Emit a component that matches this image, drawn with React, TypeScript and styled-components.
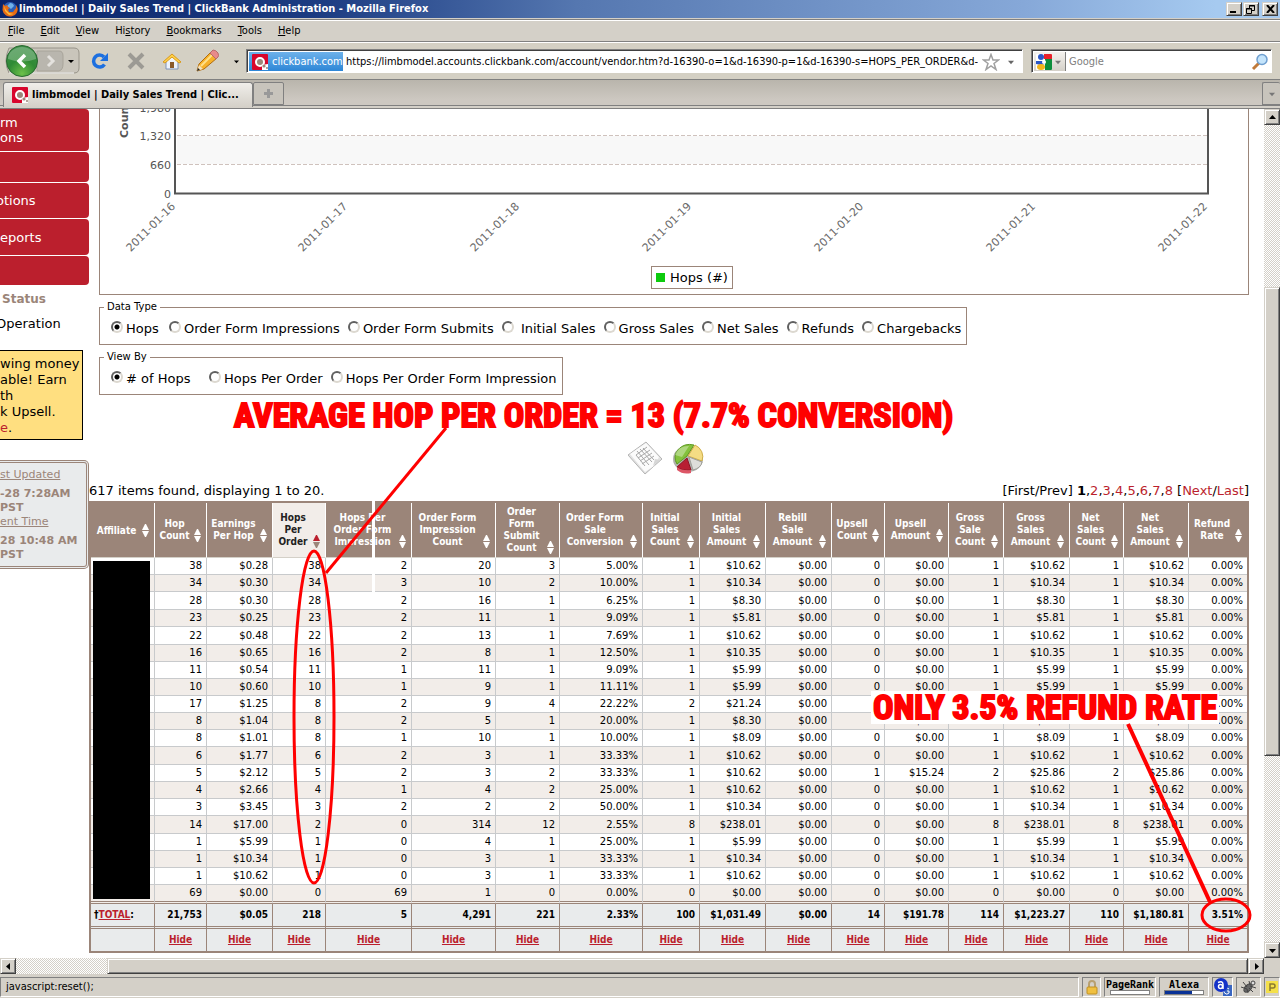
import React from "react";
import styled, { createGlobalStyle, css } from "styled-components";

const ui = '"DejaVu Sans Condensed", "DejaVu Sans", sans-serif';
const page = '"DejaVu Sans", sans-serif';
const face = "#d4d0c8";
const taupe = "#9b8579";
const red = "#bb1f2d";

const Global = createGlobalStyle`
  *, *::before, *::after { box-sizing: border-box; }
  body { margin: 0; background: ${face}; font-family: ${page}; font-size: 13px; color: #000; }
  button { font: inherit; color: inherit; padding: 0; border: 0; background: none; }
  svg { flex: none; }
  a { color: ${red}; }
`;

const raised = css`
  background: ${face};
  border: 1px solid;
  border-color: ${face} #404040 #404040 ${face};
  box-shadow: inset 1px 1px 0 #fff, inset -1px -1px 0 #808080;
`;
const sunken = css`
  border: 1px solid;
  border-color: #808080 #fff #fff #808080;
`;

/* ---------- window ---------- */
const Window = styled.div`
  display: flex;
  flex-direction: column;
  min-height: 100vh;
  overflow: hidden;
`;
const TitleBar = styled.header`
  display: flex;
  align-items: center;
  gap: 1px;
  height: 19px;
  padding: 0 2px;
  border-bottom: 1px solid ${face};
  background: linear-gradient(90deg, #0a246a 0%, #1c3c82 25%, #5577b0 45%, #86a8d8 80%, #a6caf0 95%);
  color: #fff;
  font: bold 11px/18px ${ui};
`;
const TitleText = styled.h1`
  flex: 1;
  margin: 0;
  font: inherit;
  white-space: nowrap;
`;
const WinButton = styled.button<{ $gap?: boolean }>`
  ${raised}
  display: grid;
  place-items: center;
  width: 16px;
  height: 14px;
  margin-left: ${(p) => (p.$gap ? 2 : 0)}px;
`;
const MenuBar = styled.nav`
  display: flex;
  align-items: center;
  gap: 16px;
  height: 23px;
  padding: 1px 8px 0;
  border-top: 1px solid #808080;
  border-bottom: 1px solid #808080;
  box-shadow: inset 0 1px 0 #fff;
  background: ${face};
  font: 11px/14px ${ui};
`;
const ToolBar = styled.div`
  display: flex;
  align-items: center;
  height: 37px;
  padding: 0 8px 0 3px;
  border-top: 1px solid #fff;
  background: #d4d0c4;
`;
const NavGroup = styled.div`
  display: flex;
  align-items: center;
  width: 79px;
`;
const ToolButton = styled.button`
  display: grid;
  place-items: center;
  width: 36px;
  height: 32px;
`;
const SmallArrow = styled.button`
  display: grid;
  place-items: center;
  width: 20px;
  height: 20px;
`;
const Field = styled.div<{ $fixed?: boolean }>`
  display: flex;
  align-items: stretch;
  height: 24px;
  margin-left: ${(p) => (p.$fixed ? 8 : 0)}px;
  border: 1px solid;
  border-color: #808080 #fff #fff #808080;
  box-shadow: inset 1px 1px 0 #404040;
  background: #fff;
  padding: 2px 1px 1px 2px;
  min-width: 0;
  ${(p) => (p.$fixed ? "width: 241px; flex: none;" : "flex: 1;")}
`;
const SiteButton = styled.button`
  display: flex;
  align-items: center;
  gap: 4px;
  flex: none;
  width: 94px;
  padding-left: 3px;
  background: linear-gradient(#6db1ea, #2d86d6);
  color: #fff;
  font: 11px/16px ${ui};
  white-space: nowrap;
`;
const TextInput = styled.input`
  flex: 1;
  min-width: 0;
  border: 0;
  padding: 0 3px;
  background: none;
  font: 11px/16px ${ui};
  color: #000;
  &::placeholder { color: #808080; opacity: 1; }
`;
const EngineButton = styled.button`
  display: flex;
  align-items: center;
  gap: 3px;
  flex: none;
  width: 32px;
  padding-left: 2px;
  border-right: 1px solid #808080;
  background: linear-gradient(#f4f2ee, #d4d0c8);
`;
const IconButton = styled.button`
  display: grid;
  place-items: center;
  flex: none;
  width: 20px;
`;
const TabBar = styled.div`
  display: flex;
  align-items: flex-end;
  height: 30px;
  padding-left: 3px;
  border-top: 1px solid #808080;
  border-bottom: 1px solid #808080;
  background: linear-gradient(#b9b5ac, #cdc8c1 20px, #cdc8c1 25px, #808080 25px, #808080 26px, ${face} 26px);
`;
const Tab = styled.button`
  display: flex;
  align-items: center;
  gap: 4px;
  width: 250px;
  height: 25px;
  margin-bottom: 1px;
  padding: 0 9px 0 8px;
  border: 1px solid #808080;
  border-bottom: 0;
  border-radius: 3px 3px 0 0;
  background: linear-gradient(#f0eeea, ${face});
  font: bold 11px/16px ${ui};
  white-space: nowrap;
`;
const NewTab = styled.button`
  display: grid;
  place-items: center;
  width: 31px;
  height: 23px;
  margin-bottom: 3px;
  border: 1px solid #808080;
  border-radius: 2px 2px 0 0;
  background: #c8c4bc;
`;
const TabList = styled(NewTab)`
  width: 18px;
  margin-left: auto;
  border-right: 0;
`;

/* ---------- scroll bars ---------- */
const Viewport = styled.div`
  display: grid;
  grid-template-columns: minmax(0, 1fr) 16px;
  grid-template-rows: 1fr 16px;
  flex: 1;
  background: ${face};
`;
const Bar = styled.div<{ $row?: boolean }>`
  display: flex;
  flex-direction: ${(p) => (p.$row ? "row" : "column")};
  background: repeating-conic-gradient(#fff 0 25%, ${face} 0 50%) 0 0 / 2px 2px;
`;
const BarButton = styled.button`
  ${raised}
  display: grid;
  place-items: center;
  flex: none;
  width: 16px;
  height: 16px;
`;
const Space = styled.div<{ $grow: number }>`
  flex: ${(p) => p.$grow} 1 0;
`;
const Thumb = styled(Space)`
  ${raised}
`;

/* ---------- page ---------- */
const Page = styled.div`
  position: relative;
  display: grid;
  grid-template-columns: 89px minmax(0, 1fr);
  padding: 0 15px 5px 0;
  background: #fff;
  overflow: hidden;
`;
const Side = styled.aside`
  overflow: hidden;
  white-space: nowrap;
`;
const NavItem = styled.a<{ $h: number }>`
  display: flex;
  align-items: center;
  height: ${(p) => p.$h}px;
  margin-bottom: 1px;
  border-radius: 0 4px 4px 0;
  background: ${red};
  color: #fff;
  line-height: 15px;
  text-decoration: none;
`;
const Cut = styled.span`
  margin-left: -4px;
`;
const StatusTitle = styled.h2`
  margin: 6px 0 9px 2px;
  font: bold 12px/16px ${page};
  color: ${taupe};
`;
const StatusText = styled.p`
  margin: 0 0 18px;
  line-height: 16px;
`;
const Promo = styled.p`
  width: 83px;
  height: 90px;
  margin: 0 0 20px;
  padding-top: 5px;
  border: 1px solid #000;
  border-left: 0;
  background: #ffdf80;
  line-height: 16px;
  a { text-decoration: none; }
`;
const Stamp = styled.dl`
  height: 109px;
  margin: 0;
  padding-top: 5px;
  border: 3px double ${taupe};
  border-left: 0;
  border-radius: 0 5px 5px 0;
  background: #e9ebec;
  color: ${taupe};
  font: 11px/14px ${page};
  dt { text-decoration: underline; margin-bottom: 5px; }
  dd { margin: 0; font-weight: bold; }
`;
const Main = styled.main`
  min-width: 0;
`;
const ChartBox = styled.section`
  margin: 0 0 6px 10px;
  border: 1px solid ${taupe};
  border-top: 0;
  svg { display: block; width: 100%; height: auto; }
`;
const Options = styled.fieldset`
  width: fit-content;
  margin: 0 0 6px 10px;
  padding: 0 5px 0 4px;
  border: 1px solid ${taupe};
  legend { padding: 0 3px; font: 10px/12px ${page}; }
`;
const OptionRow = styled.div`
  display: flex;
  gap: 8px;
  height: 31px;
  padding-left: 7px;
`;
const Option = styled.label<{ $w?: number }>`
  display: flex;
  align-items: center;
  gap: 3px;
  min-width: ${(p) => p.$w ?? 0}px;
  white-space: nowrap;
  input {
    appearance: none;
    width: 12px;
    height: 12px;
    margin: 0 0 4px;
    border: 2px solid;
    border-color: #606060 #dcd8d0 #dcd8d0 #606060;
    border-radius: 50%;
    background: #fff;
  }
  input:checked { background: radial-gradient(circle, #000 0 2px, #fff 3px); }
`;
const ViewIcons = styled.div`
  display: flex;
  justify-content: center;
  gap: 9px;
  padding: 40px 6px 0 0;
  height: 81px;
`;
const Summary = styled.div`
  display: flex;
  justify-content: space-between;
  height: 19px;
  line-height: 17px;
  white-space: nowrap;
  a { text-decoration: none; }
`;
const TableWrap = styled.div`
  position: relative;
`;
const Grid = styled.table`
  width: 100%;
  table-layout: fixed;
  border: 2px solid ${taupe};
  border-collapse: separate;
  border-spacing: 0;
  font: 10px/12px ${page};
  th, td { padding: 0; overflow: hidden; }
  thead th {
    height: 55px;
    border-right: 1px solid #fff;
    border-bottom: 1px solid ${face};
    background: ${taupe};
    color: #fff;
    font: bold 10px/12px ${ui};
    white-space: nowrap;
  }
  thead th[aria-sort] { background: #f2ede9; color: #222; }
  tbody td {
    height: 17px;
    padding-right: 4px;
    border-right: 1px solid #c8cacc;
    border-bottom: 1px solid #c8cacc;
    text-align: right;
  }
  tbody tr:nth-child(even) td { background: #f2ede9; }
  tbody tr:nth-child(3) td, tbody tr:nth-child(5) td,
  tbody tr:nth-child(12) td, tbody tr:nth-child(16) td { height: 18px; }
  tbody tr:last-child td { height: 19px; border-bottom: 3px double ${taupe}; }
  tfoot td {
    height: 22px;
    padding-right: 4px;
    border-right: 1px solid ${taupe};
    background: #e9ebec;
    font: bold 10px/12px ${ui};
    text-align: right;
  }
  tfoot tr:first-child td { height: 25px; border-bottom: 3px double ${taupe}; }
  tfoot tr:first-child td:first-child { text-align: left; padding-left: 3px; }
  tfoot tr:last-child td { text-align: center; padding-right: 0; }
  tr > :last-child { border-right: 0 !important; }
`;
const HeadCell = styled.div`
  display: flex;
  align-items: flex-end;
  padding-right: 5px;
  span { flex: 1; text-align: center; min-width: 0; }
  svg { display: block; }
`;
const Redaction = styled.div`
  position: absolute;
  left: 4px;
  top: 60px;
  bottom: 54px;
  width: 57px;
  background: #000;
`;

/* ---------- notes drawn over the page ---------- */
const Note = styled.strong<{ $x: number; $y: number; $fill?: boolean }>`
  position: absolute;
  left: ${(p) => p.$x}px;
  top: ${(p) => p.$y}px;
  padding: 0 2px;
  background: ${(p) => (p.$fill ? "#fff" : "none")};
  color: #f00;
  font: bold 34px/33px "Liberation Sans Narrow", "Roboto Condensed", ${ui};
  -webkit-text-stroke: 2px #f00;
  white-space: nowrap;
`;
const Marks = styled.svg`
  position: absolute;
  left: 0;
  top: 0;
  pointer-events: none;
`;

/* ---------- status bar ---------- */
const StatusBar = styled.footer`
  display: flex;
  gap: 3px;
  height: 24px;
  padding: 2px 0 1px;
  border-top: 1px solid ${face};
  background: ${face};
  font: 11px/18px ${ui};
`;
const Panel = styled.div<{ $w?: number }>`
  ${sunken}
  display: flex;
  flex-direction: column;
  align-items: center;
  justify-content: center;
  ${(p) => (p.$w ? `width: ${p.$w}px;` : "flex: 1; align-items: flex-start; padding-left: 5px;")}
  font-family: ${(p) => (p.$w ? '"DejaVu Sans Mono", monospace' : ui)};
  font-weight: ${(p) => (p.$w ? "bold" : "normal")};
  font-size: ${(p) => (p.$w ? 10 : 11)}px;
  line-height: ${(p) => (p.$w ? 11 : 18)}px;
`;
const Meter = styled.div<{ $v: number }>`
  width: 40px;
  height: 5px;
  border: 1px solid #808080;
  background: linear-gradient(90deg, #0a3296 ${(p) => p.$v}%, #fff ${(p) => p.$v}%);
`;

/* ---------- icons ---------- */
const Firefox = () => (
  <svg width="16" height="16" viewBox="0 0 16 16">
    <circle cx="8" cy="8" r="7" fill="#2b5fb8" />
    <path d="M8 2a4 4 0 0 1 4 3L9 8 5 5z" fill="#6fb1ea" />
    <path d="M1 3l2 2 2-1 1 2 2 1-2 1 1 3 4 0 3-4 0-3 1.600 3a7 7 0 0 1-5 8A7.500 7.500 0 0 1 .5 9z" fill="#e66b14" />
    <path d="M2 5l1 5 4 4 5-1-5-1-3-3z" fill="#fbbf3c" />
  </svg>
);
const Brand = () => (
  <svg width="16" height="16" viewBox="0 0 16 16">
    <rect width="16" height="16" rx="1" fill="#d8062c" />
    <circle cx="8" cy="8" r="4" fill={taupe} stroke="#fff" strokeWidth="2" />
    <path d="M10 16V11l6-1v6z" fill="#fff" />
    <circle cx="12" cy="12" r="1.600" fill={taupe} />
    <circle cx="15" cy="14" r="1" fill={taupe} />
  </svg>
);
const Tri = ({ dir = "d", c = "#000", s = 7 }: { dir?: string; c?: string; s?: number }) => (
  <svg width={s} height={s} viewBox="0 0 7 7">
    <path
      fill={c}
      d={{ d: "M0 2h7L3.500 6z", u: "M0 5h7L3.500 1z", l: "M5 0v7L1 3.500z", r: "M2 0v7L6 3.500z" }[dir]}
    />
  </svg>
);
const BackForward = () => (
  <svg width="77" height="34" viewBox="0 0 77 34">
    <defs>
      <radialGradient id="back" cx=".5" cy=".9" r=".9">
        <stop offset="0" stopColor="#6cc04a" />
        <stop offset=".5" stopColor="#2f8a35" />
        <stop offset="1" stopColor="#3d8f48" />
      </radialGradient>
    </defs>
    <path d="M6 4h65q5 0 5 5v15q0 5-5 5H6q-6-12 0-25z" fill="#c9c5bb" stroke="#98948a" />
    <path d="M71 29H6" stroke="#fff" />
    <path d="M34 7h22q4 0 4 5v8q0 6-4 7H34z" fill="#b9b6ae" stroke="#a8a49a" />
    <path d="M45 12l5 5-5 5" fill="none" stroke="#e4e2de" strokeWidth="3" />
    <circle cx="19" cy="17" r="15.500" fill="url(#back)" stroke="#2a6a32" />
    <path d="M5 15a14 12 0 0 1 28 0q-14 5-28 0z" fill="#fff" opacity=".25" />
    <path d="M22 11l-6 6 6 6" fill="none" stroke="#fff" strokeWidth="3.500" />
    <path d="M65 16h6l-3 3z" fill="#000" />
  </svg>
);
const Reload = () => (
  <svg width="18" height="18" viewBox="0 0 18 18">
    <path d="M13.500 12.500A6 6 0 1 1 13 5" fill="none" stroke="#1c6fe0" strokeWidth="3.500" />
    <path d="M17 1v8H9z" fill="#1c6fe0" />
  </svg>
);
const Stop = () => (
  <svg width="18" height="18" viewBox="0 0 18 18">
    <path d="M2 2l14 14M16 2L2 16" stroke="#9c9a94" strokeWidth="4" />
  </svg>
);
const Home = () => (
  <svg width="20" height="18" viewBox="0 0 20 18">
    <path d="M4 9v8h12V9l-6-6z" fill="#eef3fb" stroke="#7f93b8" />
    <path d="M1 10l9-8 9 8-2 1-7-6-7 6z" fill="#ffd24a" stroke="#d9981c" />
    <rect x="8" y="10" width="4" height="6" fill="#8a5a2b" />
  </svg>
);
const Pencil = () => (
  <svg width="24" height="24" viewBox="0 0 24 24">
    <path d="M1 22l2-7 12-12 6 6L8 20z" fill="#f7b12a" stroke="#b06c10" />
    <path d="M5 17L17 5" stroke="#ffe08a" strokeWidth="2" />
    <path d="M14 4l3-3q3 0 5 3 1 3 0 4l-2 2z" fill="#e88a8a" stroke="#b86a6a" />
    <path d="M1 22l2-6 4 4z" fill="#f3e2c0" />
    <path d="M1 22l1-3 2 2z" fill="#222" />
  </svg>
);
const Star = () => (
  <svg width="18" height="18" viewBox="0 0 18 18">
    <path d="M9 1.500l2 5.500h5.500l-4.500 3.500 2 6-5-3.500-5 3.500 2-6L1.500 7H7z" fill="#fff" stroke="#a0a0a0" strokeWidth="1.500" />
  </svg>
);
const Google = () => (
  <svg width="16" height="16" viewBox="0 0 16 16">
    <rect width="16" height="16" rx="1" fill="#fff" />
    <path d="M8 0h7q1 0 1 1v4H8z" fill="#e8202a" />
    <path d="M9 5h7v10q0 1-1 1H9z" fill="#0d8e3c" />
    <path d="M0 7h7l2 3-4 1-5-1z" fill="#2a56c6" />
    <circle cx="5" cy="3" r="3" fill="#2a56c6" />
    <circle cx="8" cy="8" r="2" fill="#fff" />
    <ellipse cx="5" cy="13" rx="4" ry="3" fill="#f3b51b" />
  </svg>
);
const Lens = () => (
  <svg width="18" height="18" viewBox="0 0 18 18">
    <path d="M2 16l6-6" stroke="#c07a3a" strokeWidth="3" />
    <circle cx="11" cy="6.500" r="5" fill="#c4e4fb" stroke="#6f9fd0" strokeWidth="1.500" />
  </svg>
);
const Sheet = () => (
  <svg width="34" height="34" viewBox="0 0 34 34">
    <path d="M0 14L18 1l16 17-17 15z" fill="#e2e2e2" stroke="#b4b4b4" />
    <path d="M2 13L18 2l13 14-5 9-9 6z" fill="#fbfbfb" />
    <path d="M9 10l12 14M12 8l12 13M15 7l11 12M8 14l9 11M8 14l11-8M10 17l12-8M12 20l12-8M14 23l12-8" stroke="#a8a8a8" />
    <path d="M25 25l2-7 5 1z" fill="#d6d6d6" />
  </svg>
);
const Pie = () => (
  <svg width="34" height="34" viewBox="0 0 34 34">
    <ellipse cx="17" cy="18" rx="15" ry="13" fill="#b0b0ac" />
    <path d="M16 15L6 23A15 13 0 0 1 23 4z" fill="#84c23c" stroke="#5d9a22" />
    <path d="M17 15l7-11a14 13 0 0 1 7 16z" fill="#f5dc84" stroke="#cfae4a" />
    <path d="M18 16l13 5q-1 6-9 8z" fill="#dededa" stroke="#a0a09a" />
    <path d="M16 17L6 26q5 4 14 3z" fill="#b81f33" stroke="#8e1424" />
    <path d="M6 26v3q6 5 14 3v-3q-9 1-14-3z" fill="#dd5666" />
    <path d="M4 14q3-9 14-9L11 16z" fill="#fff" opacity=".35" />
  </svg>
);
const Sort = ({ active }: { active?: boolean }) => (
  <svg width="7" height="13" viewBox="0 0 7 13">
    <path d="M3 0h1l3 6H0z" fill={active ? red : "#fff"} />
    <path d="M3 13h1l3-6H0z" fill={active ? taupe : "#fff"} />
  </svg>
);

/* ---------- data ---------- */
const columns: [string, number][] = [
  ["Affiliate", 64], ["Hop|Count", 52], ["Earnings|Per Hop", 66], ["Hops|Per|Order", 53],
  ["Hops Per|Order Form|Impression", 86], ["Order Form|Impression|Count", 84],
  ["Order|Form|Submit|Count", 64], ["Order Form|Sale|Conversion", 83], ["Initial|Sales|Count", 57],
  ["Initial|Sales|Amount", 66], ["Rebill|Sale|Amount", 66], ["Upsell|Count", 53],
  ["Upsell|Amount", 64], ["Gross|Sale|Count", 55], ["Gross|Sales|Amount", 66],
  ["Net|Sales|Count", 54], ["Net|Sales|Amount", 65], ["Refund|Rate", 58],
];
const rows = `38 $0.28 38 2 20 3 5.00% 1 $10.62 $0.00 0 $0.00 1 $10.62 1 $10.62 0.00%
34 $0.30 34 3 10 2 10.00% 1 $10.34 $0.00 0 $0.00 1 $10.34 1 $10.34 0.00%
28 $0.30 28 2 16 1 6.25% 1 $8.30 $0.00 0 $0.00 1 $8.30 1 $8.30 0.00%
23 $0.25 23 2 11 1 9.09% 1 $5.81 $0.00 0 $0.00 1 $5.81 1 $5.81 0.00%
22 $0.48 22 2 13 1 7.69% 1 $10.62 $0.00 0 $0.00 1 $10.62 1 $10.62 0.00%
16 $0.65 16 2 8 1 12.50% 1 $10.35 $0.00 0 $0.00 1 $10.35 1 $10.35 0.00%
11 $0.54 11 1 11 1 9.09% 1 $5.99 $0.00 0 $0.00 1 $5.99 1 $5.99 0.00%
10 $0.60 10 1 9 1 11.11% 1 $5.99 $0.00 0 $0.00 1 $5.99 1 $5.99 0.00%
17 $1.25 8 2 9 4 22.22% 2 $21.24 $0.00 0 $0.00 2 $21.24 2 $21.24 0.00%
8 $1.04 8 2 5 1 20.00% 1 $8.30 $0.00 0 $0.00 1 $8.30 1 $8.30 0.00%
8 $1.01 8 1 10 1 10.00% 1 $8.09 $0.00 0 $0.00 1 $8.09 1 $8.09 0.00%
6 $1.77 6 2 3 1 33.33% 1 $10.62 $0.00 0 $0.00 1 $10.62 1 $10.62 0.00%
5 $2.12 5 2 3 2 33.33% 1 $10.62 $0.00 1 $15.24 2 $25.86 2 $25.86 0.00%
4 $2.66 4 1 4 2 25.00% 1 $10.62 $0.00 0 $0.00 1 $10.62 1 $10.62 0.00%
3 $3.45 3 2 2 2 50.00% 1 $10.34 $0.00 0 $0.00 1 $10.34 1 $10.34 0.00%
14 $17.00 2 0 314 12 2.55% 8 $238.01 $0.00 0 $0.00 8 $238.01 8 $238.01 0.00%
1 $5.99 1 0 4 1 25.00% 1 $5.99 $0.00 0 $0.00 1 $5.99 1 $5.99 0.00%
1 $10.34 1 0 3 1 33.33% 1 $10.34 $0.00 0 $0.00 1 $10.34 1 $10.34 0.00%
1 $10.62 1 0 3 1 33.33% 1 $10.62 $0.00 0 $0.00 1 $10.62 1 $10.62 0.00%
69 $0.00 0 69 1 0 0.00% 0 $0.00 $0.00 0 $0.00 0 $0.00 0 $0.00 0.00%`
  .split("\n")
  .map((r) => r.split(" "));
const totals = "21,753 $0.05 218 5 4,291 221 2.33% 100 $1,031.49 $0.00 14 $191.78 114 $1,223.27 110 $1,180.81 3.51%".split(" ");
const days = ["16", "17", "18", "19", "20", "21", "22"];
const menus: [string, string, string][] = [
  ["", "F", "ile"], ["", "E", "dit"], ["", "V", "iew"], ["Hi", "s", "tory"],
  ["", "B", "ookmarks"], ["", "T", "ools"], ["", "H", "elp"],
];

const Chart = () => (
  <svg viewBox="0 0 1148 185" fontFamily="DejaVu Sans" fontSize="11" fill="#555">
    <rect x="77" y="27" width="1030" height="28" fill="#f8f8f8" />
    <path d="M77 26.500h1030M77 55.500h1030" stroke="#cfc2bd" strokeDasharray="4 2" />
    <path d="M75 0V84.500H1108V0" fill="none" stroke="#555" strokeWidth="2" />
    <g textAnchor="end">
      <text x="71" y="3">1,980</text>
      <text x="71" y="31">1,320</text>
      <text x="71" y="60">660</text>
      <text x="71" y="89">0</text>
      {days.map((d, i) => (
        <text key={d} fill="#6a6a6a" transform={`translate(${76 + i * 172} 98) rotate(-45)`}>
          2011-01-{d}
        </text>
      ))}
    </g>
    <text transform="translate(28 29) rotate(-90)" fontWeight="bold">Count</text>
    <rect x="551.500" y="157.500" width="81" height="22" fill="#fff" stroke={taupe} />
    <rect x="556" y="164" width="9" height="9" fill="#0ecb0e" />
    <text x="570" y="173" fontSize="13" fill="#000">Hops (#)</text>
  </svg>
);

const dataTypes: [string, number][] = [
  ["Hops", 50], ["Order Form Impressions", 170], ["Order Form Submits", 143], ["\u00a0Initial Sales", 93],
  ["Gross Sales", 90], ["Net Sales", 76], ["Refunds", 67], ["Chargebacks", 97],
];
const viewBys: [string, number][] = [["# of Hops", 90], ["Hops Per Order", 113], ["Hops Per Order Form Impression", 221]];

const Radios = ({ title, name, items }: { title: string; name: string; items: [string, number][] }) => (
  <Options>
    <legend>{title}</legend>
    <OptionRow>
      {items.map(([t, w], i) => (
        <Option key={t} $w={w}>
          <input type="radio" name={name} defaultChecked={i === 0} />
          {t}
        </Option>
      ))}
    </OptionRow>
  </Options>
);

export default function App() {
  return (
    <Window>
      <Global />
      <TitleBar>
        <Firefox />
        <TitleText>limbmodel | Daily Sales Trend | ClickBank Administration - Mozilla Firefox</TitleText>
        <WinButton aria-label="Minimize">
          <svg width="10" height="8"><path d="M1 6h6v2H1z" /></svg>
        </WinButton>
        <WinButton aria-label="Restore">
          <svg width="10" height="9" fill="none" stroke="#000"><path d="M3.500 3V.5h5v5H6M3 1h6M.5 3.500h5v5h-5zM0 4h6" /></svg>
        </WinButton>
        <WinButton aria-label="Close" $gap>
          <svg width="9" height="8"><path d="M1 0l7 8M8 0L1 8" stroke="#000" strokeWidth="2" /></svg>
        </WinButton>
      </TitleBar>
      <MenuBar>
        {menus.map(([a, b, c]) => (
          <button key={b + c}>{a}<u>{b}</u>{c}</button>
        ))}
      </MenuBar>
      <ToolBar>
        <NavGroup><BackForward /></NavGroup>
        <ToolButton aria-label="Reload"><Reload /></ToolButton>
        <ToolButton aria-label="Stop"><Stop /></ToolButton>
        <ToolButton aria-label="Home"><Home /></ToolButton>
        <ToolButton aria-label="Edit"><Pencil /></ToolButton>
        <SmallArrow aria-label="More"><Tri s={5} /></SmallArrow>
        <Field>
          <SiteButton><Brand />clickbank.com</SiteButton>
          <TextInput
            aria-label="Address"
            readOnly
            value="https://limbmodel.accounts.clickbank.com/account/vendor.htm?d-16390-o=1&d-16390-p=1&d-16390-s=HOPS_PER_ORDER&d-16390"
          />
          <IconButton aria-label="Bookmark"><Star /></IconButton>
          <IconButton aria-label="History"><Tri c="#666" s={6} /></IconButton>
        </Field>
        <Field $fixed>
          <EngineButton aria-label="Engine"><Google /><Tri c="#777" s={6} /></EngineButton>
          <TextInput aria-label="Search" placeholder="Google" />
          <IconButton aria-label="Go"><Lens /></IconButton>
        </Field>
      </ToolBar>
      <TabBar>
        <Tab><Brand />limbmodel | Daily Sales Trend | Clic...</Tab>
        <NewTab aria-label="New tab">
          <svg width="9" height="9"><path d="M3 0h3v3h3v3H6v3H3V6H0V3h3z" fill="#999" /></svg>
        </NewTab>
        <TabList aria-label="All tabs"><Tri c="#777" s={6} /></TabList>
      </TabBar>

      <Viewport>
        <Page>
          <Side>
            <NavItem href="#" $h={42}>rm<br />ons</NavItem>
            <NavItem href="#" $h={30} />
            <NavItem href="#" $h={35}><Cut>otions</Cut></NavItem>
            <NavItem href="#" $h={36}>eports</NavItem>
            <NavItem href="#" $h={29} />
            <StatusTitle>Status</StatusTitle>
            <StatusText><Cut>Operation</Cut></StatusText>
            <Promo>
              wing money<br />able! Earn<br />th<br />k Upsell.<br /><a href="#">e</a>.
            </Promo>
            <Stamp>
              <dt>st Updated</dt>
              <dd>-28 7:28AM<br />PST</dd>
              <dt>ent Time</dt>
              <dd>28 10:48 AM<br />PST</dd>
            </Stamp>
          </Side>
          <Main>
            <ChartBox><Chart /></ChartBox>
            <Radios title="Data Type" name="type" items={dataTypes} />
            <Radios title="View By" name="view" items={viewBys} />
            <ViewIcons><Sheet /><Pie /></ViewIcons>
            <Summary>
              <span>617 items found, displaying 1 to 20.</span>
              <span>
                [First/Prev] <b>1</b>
                {[2, 3, 4, 5, 6, 7, 8].map((n) => (
                  <React.Fragment key={n}>,<a href="#">{n}</a></React.Fragment>
                ))}{" "}
                [<a href="#">Next</a>/<a href="#">Last</a>]
              </span>
            </Summary>
            <TableWrap>
              <Grid>
                <colgroup>
                  {columns.map(([t, w]) => <col key={t} width={w} />)}
                </colgroup>
                <thead>
                  <tr>
                    {columns.map(([t], i) => (
                      <th key={t} scope="col" aria-sort={i === 3 ? "descending" : undefined}>
                        <HeadCell>
                          <span>
                            {t.split("|").map((l, k) => (
                              <React.Fragment key={l}>{k > 0 && <br />}{l}</React.Fragment>
                            ))}
                          </span>
                          <button aria-label="Sort"><Sort active={i === 3} /></button>
                        </HeadCell>
                      </th>
                    ))}
                  </tr>
                </thead>
                <tbody>
                  {rows.map((r, i) => (
                    <tr key={i}>
                      <td />
                      {r.map((v, k) => <td key={k}>{v}</td>)}
                    </tr>
                  ))}
                </tbody>
                <tfoot>
                  <tr>
                    <td>†<a href="#">TOTAL</a>:</td>
                    {totals.map((v, k) => <td key={k}>{v}</td>)}
                  </tr>
                  <tr>
                    <td />
                    {totals.map((_, k) => <td key={k}><a href="#">Hide</a></td>)}
                  </tr>
                </tfoot>
              </Grid>
              <Redaction />
            </TableWrap>
          </Main>
          <Note $x={232} $y={290}>AVERAGE HOP PER ORDER = 13 (7.7% CONVERSION)</Note>
          <Note $x={871} $y={582} $fill>ONLY 3.5% REFUND RATE</Note>
          <Marks width="1264" height="849" viewBox="0 109 1264 849" fill="none" stroke="#f00" strokeWidth="3">
            <rect x="372" y="501" width="3" height="91" fill="#fff" stroke="none" />
            <path d="M446 428L326 573" />
            <ellipse cx="314" cy="717" rx="20" ry="166" />
            <path d="M1128 724l82 178" strokeWidth="4" />
            <ellipse cx="1226" cy="915" rx="24" ry="16" />
          </Marks>
        </Page>
        <Bar>
          <BarButton aria-label="Scroll up"><Tri dir="u" /></BarButton>
          <Space $grow={162} />
          <Thumb $grow={469} />
          <Space $grow={186} />
          <BarButton aria-label="Scroll down"><Tri /></BarButton>
        </Bar>
        <Bar $row>
          <BarButton aria-label="Scroll left"><Tri dir="l" /></BarButton>
          <Space $grow={91} />
          <Thumb $grow={1141} />
          <BarButton aria-label="Scroll right"><Tri dir="r" /></BarButton>
        </Bar>
      </Viewport>

      <StatusBar>
        <Panel>javascript:reset();</Panel>
        <Panel $w={19}>
          <svg width="12" height="15"><path d="M3 8V4a3 3 0 0 1 6 0v4" fill="none" stroke="#b8a070" strokeWidth="2" /><rect x="1" y="7" width="10" height="7" rx="1" fill="#f0c040" stroke="#c09020" /></svg>
        </Panel>
        <Panel $w={52}>PageRank<Meter $v={0} /></Panel>
        <Panel $w={50}>Alexa<Meter $v={72} /></Panel>
        <Panel $w={21}>
          <svg width="18" height="18"><rect x="9" y="7" width="9" height="11" fill="#3a66c0" /><path d="M15 11a3 3 0 1 0 0 4v-2h-2" fill="none" stroke="#fff" /><circle cx="7" cy="7" r="7" fill="#1432c8" /><circle cx="6.500" cy="8.500" r="2" fill="none" stroke="#fff" strokeWidth="1.500" /><path d="M4 4.500q5-2 5 2V11" fill="none" stroke="#fff" strokeWidth="1.500" /></svg>
        </Panel>
        <Panel $w={25}>
          <svg width="18" height="16" stroke="#444"><ellipse cx="8" cy="9" rx="5" ry="3" transform="rotate(-45 8 9)" fill="#666" /><path d="M1 8l6 2M3 3l4 5M8 14l-1-4M13 13l-4-4M16 9l-6-2M9 2l1 4" /><circle cx="13" cy="4" r="2" fill="#ddd" /></svg>
        </Panel>
        <Panel $w={16}>
          <svg width="12" height="12"><rect width="12" height="12" fill="#f4e04a" /><path d="M4 10V3h3a2 2 0 0 1 0 4H4" fill="none" stroke="#8a7a30" strokeWidth="1.500" /></svg>
        </Panel>
      </StatusBar>
    </Window>
  );
}
